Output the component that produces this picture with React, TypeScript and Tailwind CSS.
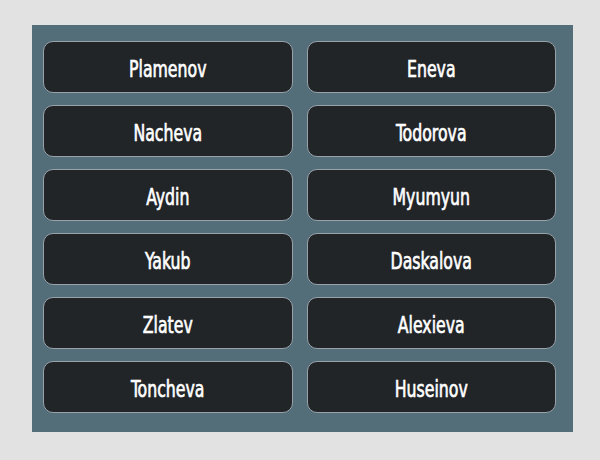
const names = [
  "Plamenov", "Eneva",
  "Nacheva", "Todorova",
  "Aydin", "Myumyun",
  "Yakub", "Daskalova",
  "Zlatev", "Alexieva",
  "Toncheva", "Huseinov",
]

export default function App() {
  return (
    <div className="w-[600px] h-[460px] bg-[#e2e2e2] pt-[25px] pl-[32px]">
      <div className="w-[541px] h-[407px] bg-[#536d79] pt-[16px] pl-[11px] pr-[17px] pb-[19px]">
        <div className="grid grid-cols-2 gap-x-[14px] gap-y-[12px]">
          {names.map((n) => (
            <button
              key={n}
              className="h-[52px] rounded-[10px] border-[1.5px] border-[#97a3a9] bg-[#222528] text-white font-['DejaVu_Sans_Condensed',sans-serif] flex items-center justify-center pt-[5px]"
            >
              <span className="text-[17.5px] inline-block scale-y-[1.33] [-webkit-text-stroke:0.5px_white]">{n}</span>
            </button>
          ))}
        </div>
      </div>
    </div>
  )
}
